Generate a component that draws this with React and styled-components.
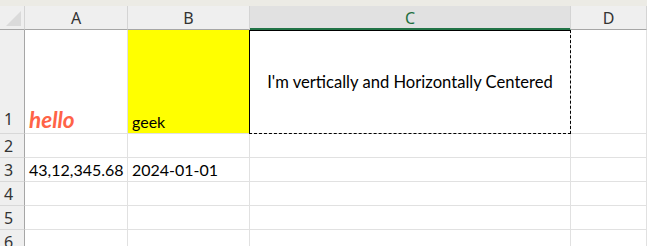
import React from 'react';
import styled, { createGlobalStyle, css } from 'styled-components';

const GlobalStyle = createGlobalStyle`
    html, body {
        margin: 0;
        padding: 0;
        background: #fff;
        overflow: hidden;
    }
`;

const Window = styled.div`
    width: 647px;
    height: 246px;
    overflow: hidden;
    display: flex;
    flex-direction: column;
    background: #fff;
`;

const TopBand = styled.div`
    height: 6px;
    flex: none;
    background: #ecebe5;
`;

const Sheet = styled.div`
    display: grid;
    grid-template-columns: 25px 103px 122px 321px 1fr;
    grid-template-rows: 24px 104px repeat(5, 24px);
    font-family: Lato, 'Liberation Sans', sans-serif;
`;

const Corner = styled.div`
    position: relative;
    background: #efefef;
    border-right: 1px solid #d4d4d4;
    border-bottom: 1px solid #a6a6a6;

    &::after {
        content: '';
        position: absolute;
        right: 3px;
        bottom: 3px;
        width: 0;
        height: 0;
        border-left: 15px solid transparent;
        border-bottom: 15px solid #dadada;
    }
`;

const ColHead = styled.div`
    display: flex;
    align-items: center;
    justify-content: center;
    background: ${({ selected }) => (selected ? '#e1e1e1' : '#efefef')};
    color: ${({ selected }) => (selected ? '#1e6f3f' : '#333')};
    border-right: 1px solid #d4d4d4;
    border-bottom: 1px solid ${({ selected }) => (selected ? '#217346' : '#a6a6a6')};
    box-shadow: ${({ selected }) => (selected ? 'inset 0 -1px 0 #217346' : 'none')};
    font-family: 'Noto Sans', 'Open Sans', sans-serif;
    font-size: 16px;
    padding-top: 1px;
`;

const RowHead = styled.div`
    display: flex;
    align-items: ${({ tall }) => (tall ? 'flex-end' : 'center')};
    padding-left: 4px;
    padding-bottom: ${({ tall }) => (tall ? '3px' : '0')};
    background: #efefef;
    color: #333;
    border-right: 1px solid #a6a6a6;
    border-bottom: 1px solid #d8d8d8;
    font-family: 'Noto Sans', 'Open Sans', sans-serif;
    font-size: 16px;
`;

const Cell = styled.div`
    position: relative;
    display: flex;
    align-items: flex-end;
    padding: 0 0 2px 4px;
    background: ${({ fill }) => fill || '#fff'};
    border-right: 1px solid ${({ fill }) => fill || '#e1e1e1'};
    border-bottom: 1px solid #e1e1e1;
    color: #000;
    font-size: 16px;
    white-space: nowrap;

    ${({ centered }) =>
        centered &&
        css`
            align-items: center;
            justify-content: center;
            padding: 0;
            font-size: 16.6px;
        `}

    ${({ active }) =>
        active &&
        css`
            &::after {
                content: '';
                position: absolute;
                top: 0;
                left: -1px;
                right: -1px;
                bottom: -1px;
                border: 1px dashed #000;
                border-top-style: solid;
                border-left-style: solid;
                pointer-events: none;
            }
        `}
`;

const Hello = styled.span`
    color: #ff6347;
    font-weight: 700;
    font-style: italic;
    font-size: 22.5px;
    line-height: 1;
`;

const columns = ['A', 'B', 'C', 'D'];

const rows = [
    {
        n: 1,
        tall: true,
        cells: [
            { content: <Hello>hello</Hello> },
            { content: 'geek', fill: '#ffff00' },
            { content: "I'm vertically and Horizontally Centered", centered: true, active: true },
            {}
        ]
    },
    { n: 2, cells: [{}, {}, {}, {}] },
    { n: 3, cells: [{ content: '43,12,345.68' }, { content: '2024-01-01' }, {}, {}] },
    { n: 4, cells: [{}, {}, {}, {}] },
    { n: 5, cells: [{}, {}, {}, {}] },
    { n: 6, cells: [{}, {}, {}, {}] }
];

const App = () => (
    <Window>
        <GlobalStyle />
        <TopBand />
        <Sheet>
            <Corner />
            {columns.map(col => (
                <ColHead key={col} selected={col === 'C'}>
                    {col}
                </ColHead>
            ))}
            {rows.map(row => (
                <React.Fragment key={row.n}>
                    <RowHead tall={row.tall}>{row.n}</RowHead>
                    {row.cells.map((cell, i) => (
                        <Cell
                            key={i}
                            fill={cell.fill}
                            centered={cell.centered}
                            active={cell.active}
                        >
                            {cell.content}
                        </Cell>
                    ))}
                </React.Fragment>
            ))}
        </Sheet>
    </Window>
);

export default App;
